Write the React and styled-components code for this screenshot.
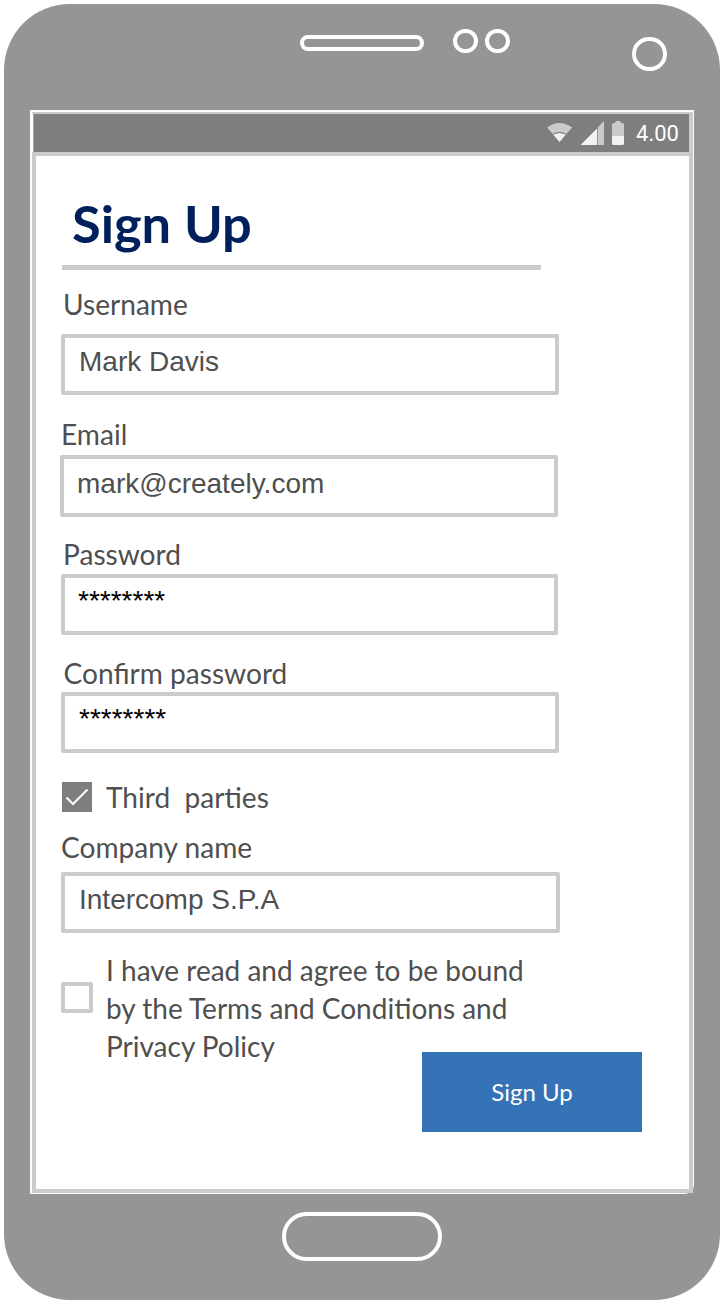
import React from "react";
import styled, { createGlobalStyle } from "styled-components";

const Global = createGlobalStyle`
  * { box-sizing: border-box; }
  body { margin: 0; background: #fff; font-family: Lato, sans-serif; }
`;

const Page = styled.main`
  width: 726px;
  height: 1305px;
  padding: 4px 6px 5px 4px;
  overflow: hidden;
`;

const Phone = styled.div`
  display: flex;
  flex-direction: column;
  height: 1296px;
  background: #959595;
  border-radius: 66px;
`;

const PhoneTop = styled.div`
  display: flex;
  align-items: flex-start;
  height: 106px;
`;

const Speaker = styled.div`
  width: 124px;
  height: 15.5px;
  margin: 31.3px 0 0 296px;
  border: 4px solid #fff;
  border-radius: 8px;
`;

const Lens = styled.div`
  width: ${(p) => p.$size}px;
  height: ${(p) => p.$size}px;
  margin: ${(p) => p.$top}px 0 0 ${(p) => p.$left}px;
  border: 4px solid #fff;
  border-radius: 50%;
`;

const Bezel = styled.div`
  width: 664px;
  height: 1084px;
  margin-left: 26px;
  padding: 2px 1px 1px 2px;
  background: #fafafa;
  border-radius: 0 0 9px 0;
`;

const Screen = styled.div`
  display: flex;
  flex-direction: column;
  height: 1081px;
  background: #fff;
  border: solid #cbcbcb;
  border-width: 2px 4px 4px 0;
`;

const StatusBar = styled.div`
  display: flex;
  align-items: center;
  justify-content: flex-end;
  height: 38px;
  margin-left: 2px;
  padding-right: 10px;
  background: #7e7e7e;
  box-shadow: -1px 0 0 #a5a5a5;
`;

const StatusIcons = styled.svg`
  display: block;
  margin-right: 11px;
`;

const Clock = styled.time`
  padding-top: 1px;
  font: 22px/26px Roboto, sans-serif;
  color: #fff;
`;

const Form = styled.form`
  flex: 1;
  display: flex;
  flex-direction: column;
  align-items: flex-start;
  border-top: 4px solid #cbcbcb;
  border-left: 4px solid #cbcbcb;
  padding-left: 24px;
`;

const Title = styled.h1`
  margin: 33px 0 0 12px;
  height: 76px;
  font-size: 52.4px;
  line-height: 68px;
  font-weight: 700;
  color: #00205b;
  white-space: nowrap;
`;

const Rule = styled.div`
  width: 479px;
  height: 5px;
  margin-left: 2px;
  background: #cbcbcb;
`;

const Field = styled.div`
  margin: ${(p) => p.$top}px 0 0 ${(p) => p.$left}px;
`;

const Label = styled.label`
  display: block;
  margin-left: ${(p) => p.$left || 0}px;
  font-size: 28.1px;
  line-height: 34px;
  color: #4f4f4f;
  white-space: pre;
`;

const Box = styled.div`
  width: ${(p) => p.$width || 498}px;
  height: ${(p) => p.$height || 61}px;
  margin-top: ${(p) => p.$gap}px;
  padding: ${(p) => p.$pad || 8}px 0 0 ${(p) => p.$inset || 14}px;
  border: 4px solid #cbcbcb;
  border-radius: 2px;
  font: 28px/32px "Liberation Sans", sans-serif;
  color: ${(p) => (p.$secret ? "#000" : "#4f4f4f")};
`;

const CheckRow = styled.div`
  display: flex;
  align-items: flex-start;
  margin: ${(p) => p.$top}px 0 0 2px;
`;

const CheckedBox = styled.span`
  display: block;
  width: 30px;
  height: 30px;
  margin: 2px 14px 0 0;
  background: #7e7e7e;
`;

const EmptyBox = styled.span`
  width: 32px;
  height: 31px;
  margin: 31px 13px 0 -1px;
  border: 4px solid #cbcbcb;
  border-radius: 2px;
`;

const Terms = styled.p`
  margin: 0;
  font-size: 28px;
  line-height: 38px;
  color: #4f4f4f;
  white-space: nowrap;
`;

const Submit = styled.button`
  width: 220px;
  height: 80px;
  margin: -13px 0 0 362px;
  padding: 0;
  border: 0;
  background: #3572b6;
  color: #fff;
  font: 24px/28px Lato, sans-serif;
`;

const PhoneBottom = styled.div`
  display: flex;
  justify-content: center;
  padding-top: 17.5px;
`;

const HomeButton = styled.div`
  width: 160px;
  height: 49px;
  border: 4px solid #fff;
  border-radius: 25px;
`;

export default function App() {
  return (
    <Page>
      <Global />
      <Phone>
        <PhoneTop>
          <Speaker />
          <Lens $size={24.4} $top={25} $left={29.2} />
          <Lens $size={24.4} $top={25} $left={7.8} />
          <Lens $size={34.4} $top={32.8} $left={122.4} />
        </PhoneTop>
        <Bezel>
          <Screen>
            <StatusBar>
              <StatusIcons width="78" height="24" viewBox="547 121 78 24">
                <path d="M547 127.500Q559.500 118.500 572.300 127.500L566 134.200Q559.500 130.500 553 134.200Z" fill="#cbcbcb" />
                <path d="M553 134.500Q559.500 131.500 566 134.500L559.500 142Z" fill="#f2f2f2" />
                <path d="M553 134.300Q559.500 130.500 566 134.300" fill="none" stroke="#7e7e7e" />
                <path d="M597 128.500L604 121V145H597Z" fill="#cbcbcb" />
                <path d="M580.500 145L597 128.500V145Z" fill="#f2f2f2" />
                <path d="M597.500 128V145" stroke="#7e7e7e" strokeWidth="0.7" />
                <path d="M612 136V124.500Q612 123 613.500 123H615.500V121H620.500V123H622.500Q624 123 624 124.500V136Z" fill="#cbcbcb" />
                <path d="M612 136H624V143.500Q624 145 622.500 145H613.500Q612 145 612 143.500Z" fill="#f2f2f2" />
              </StatusIcons>
              <Clock>4.00</Clock>
            </StatusBar>
            <Form>
              <Title>Sign Up</Title>
              <Rule />
              <Field $top={17} $left={1}>
                <Label $left={2}>Username</Label>
                <Box $gap={13}>Mark Davis</Box>
              </Field>
              <Field $top={22} $left={0}>
                <Label $left={1}>Email</Label>
                <Box $gap={4} $height={62} $pad={9} $inset={13}>mark@creately.com</Box>
              </Field>
              <Field $top={20} $left={1}>
                <Label $left={2}>Password</Label>
                <Box $gap={3} $width={497} $pad={7} $inset={13} $secret>********</Box>
              </Field>
              <Field $top={21} $left={1}>
                <Label $left={2.6}>Confirm password</Label>
                <Box $gap={2} $pad={7} $secret>********</Box>
              </Field>
              <CheckRow $top={27}>
                <CheckedBox>
                  <svg width="30" height="30" viewBox="0 0 30 30">
                    <path d="M4.500 15.500L11 22L25.500 7.500" fill="none" stroke="#fff" strokeWidth="2" />
                  </svg>
                </CheckedBox>
                <Label>{"Third  parties"}</Label>
              </CheckRow>
              <Field $top={16} $left={1}>
                <Label>Company name</Label>
                <Box $gap={8} $width={499}>Intercomp S.P.A</Box>
              </Field>
              <CheckRow $top={18}>
                <EmptyBox />
                <Terms>
                  I have read and agree to be bound<br />
                  by the Terms and Conditions and<br />
                  Privacy Policy
                </Terms>
              </CheckRow>
              <Submit type="button">Sign Up</Submit>
            </Form>
          </Screen>
        </Bezel>
        <PhoneBottom>
          <HomeButton />
        </PhoneBottom>
      </Phone>
    </Page>
  );
}
